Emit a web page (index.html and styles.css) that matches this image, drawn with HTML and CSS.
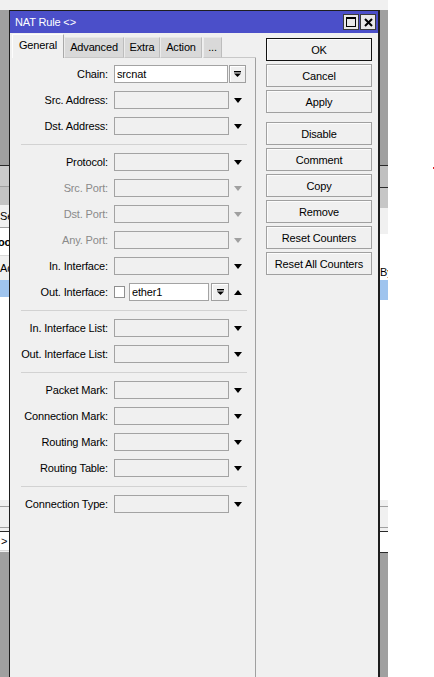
FILE: index.html
```html
<!DOCTYPE html>
<html>
<head>
<meta charset="utf-8">
<link rel="stylesheet" href="styles.css">
</head>
<body>
<div class="desktop">
  <div class="strip strip-l">
    <div class="b-gray155"></div>
    <div class="b-line-dark"></div>
    <div class="b-c20"></div>
    <div class="b-line-mid"></div>
    <div class="b-c18"></div>
    <div class="b-f22 bt"><span class="cut">Se</span></div>
    <div class="b-line-mid"></div>
    <div class="b-w27 bt bold"><span class="cut2">oo</span></div>
    <div class="b-line-light"></div>
    <div class="b-f24 bt"><span class="cut">Ad</span></div>
    <div class="b-blue17"></div>
    <div class="b-w203"></div>
    <div class="b-f6"></div>
    <div class="b-line-mid"></div>
    <div class="b-f20"></div>
    <div class="b-line-mid"></div>
    <div class="b-f3"></div>
    <div class="b-line-dark"></div>
    <div class="b-w18 bt"><span class="cut3">&gt;</span></div>
    <div class="b-line-light"></div>
    <div class="b-f1"></div>
    <div class="b-gray-rest"></div>
  </div>

  <div class="window">
    <div class="titlebar">
      <span class="title">NAT Rule &lt;&gt;</span>
      <div class="tb-btns">
        <div class="tb-btn">
          <svg width="10" height="10" viewBox="0 0 10 10"><rect x="0.5" y="0.5" width="9" height="9" fill="none" stroke="#000" stroke-width="1"/><rect x="0" y="0" width="10" height="2" fill="#000"/></svg>
        </div>
        <div class="tb-btn">
          <svg width="9" height="9" viewBox="0 0 9 9"><path d="M1 1 L8 8 M8 1 L1 8" stroke="#000" stroke-width="2" fill="none"/></svg>
        </div>
      </div>
    </div>
    <div class="wbody">
      <div class="tabsarea">
        <div class="tabs">
          <div class="tab active w-gen">General</div>
          <div class="tab w-adv">Advanced</div>
          <div class="tab w-ext">Extra</div>
          <div class="tab w-act">Action</div>
          <div class="tab w-more">...</div>
          <div class="tabfill"></div>
        </div>
        <div class="panel">
          <div class="row">
            <div class="lbl">Chain:</div>
            <div class="field white short">srcnat</div>
            <div class="ddbtn chainbtn"><svg width="7" height="6" viewBox="0 0 7 6"><rect x="0" y="0" width="7" height="1.4" fill="#000"/><polygon points="0,2.4 7,2.4 3.5,6" fill="#000"/></svg></div>
          </div>
          <div class="row">
            <div class="lbl">Src. Address:</div>
            <div class="field"></div>
            <div class="arrow"><span class="tri-down"></span></div>
          </div>
          <div class="row">
            <div class="lbl">Dst. Address:</div>
            <div class="field"></div>
            <div class="arrow"><span class="tri-down"></span></div>
          </div>
          <div class="sep"></div>
          <div class="row">
            <div class="lbl">Protocol:</div>
            <div class="field"></div>
            <div class="arrow"><span class="tri-down"></span></div>
          </div>
          <div class="row dis">
            <div class="lbl">Src. Port:</div>
            <div class="field"></div>
            <div class="arrow"><span class="tri-down"></span></div>
          </div>
          <div class="row dis">
            <div class="lbl">Dst. Port:</div>
            <div class="field"></div>
            <div class="arrow"><span class="tri-down"></span></div>
          </div>
          <div class="row dis">
            <div class="lbl">Any. Port:</div>
            <div class="field"></div>
            <div class="arrow"><span class="tri-down"></span></div>
          </div>
          <div class="row">
            <div class="lbl">In. Interface:</div>
            <div class="field"></div>
            <div class="arrow"><span class="tri-down"></span></div>
          </div>
          <div class="row">
            <div class="lbl">Out. Interface:</div>
            <div class="check"></div>
            <div class="field white narrow">ether1</div>
            <div class="ddbtn ifbtn"><svg width="7" height="6" viewBox="0 0 7 6"><rect x="0" y="0" width="7" height="1.4" fill="#000"/><polygon points="0,2.4 7,2.4 3.5,6" fill="#000"/></svg></div>
            <div class="arrow"><span class="tri-up"></span></div>
          </div>
          <div class="sep"></div>
          <div class="row">
            <div class="lbl">In. Interface List:</div>
            <div class="field"></div>
            <div class="arrow"><span class="tri-down"></span></div>
          </div>
          <div class="row">
            <div class="lbl">Out. Interface List:</div>
            <div class="field"></div>
            <div class="arrow"><span class="tri-down"></span></div>
          </div>
          <div class="sep"></div>
          <div class="row">
            <div class="lbl">Packet Mark:</div>
            <div class="field"></div>
            <div class="arrow"><span class="tri-down"></span></div>
          </div>
          <div class="row">
            <div class="lbl">Connection Mark:</div>
            <div class="field"></div>
            <div class="arrow"><span class="tri-down"></span></div>
          </div>
          <div class="row">
            <div class="lbl">Routing Mark:</div>
            <div class="field"></div>
            <div class="arrow"><span class="tri-down"></span></div>
          </div>
          <div class="row">
            <div class="lbl">Routing Table:</div>
            <div class="field"></div>
            <div class="arrow"><span class="tri-down"></span></div>
          </div>
          <div class="sep"></div>
          <div class="row">
            <div class="lbl">Connection Type:</div>
            <div class="field"></div>
            <div class="arrow"><span class="tri-down"></span></div>
          </div>
        </div>
      </div>
      <div class="buttons">
        <div class="btn default">OK</div>
        <div class="btn">Cancel</div>
        <div class="btn">Apply</div>
        <div class="btn gap-before">Disable</div>
        <div class="btn">Comment</div>
        <div class="btn">Copy</div>
        <div class="btn">Remove</div>
        <div class="btn">Reset Counters</div>
        <div class="btn">Reset All Counters</div>
      </div>
    </div>
  </div>

  <div class="strip strip-r">
    <div class="b-gray155"></div>
    <div class="b-line-dark"></div>
    <div class="b-c21"></div>
    <div class="b-line-dark"></div>
    <div class="b-c20b"></div>
    <div class="b-f26"></div>
    <div class="b-w29"></div>
    <div class="b-w17 bt"><span class="cut">By</span></div>
    <div class="b-blue20"></div>
    <div class="b-w200"></div>
    <div class="b-f6"></div>
    <div class="b-line-mid"></div>
    <div class="b-f20"></div>
    <div class="b-line-mid"></div>
    <div class="b-f3"></div>
    <div class="b-line-dark"></div>
    <div class="b-w20"></div>
    <div class="b-line-dark"></div>
    <div class="b-gray-rest"></div>
  </div>
</div>
<div class="whitecol"><div class="reddot"></div></div>
</body>
</html>
```
FILE: styles.css
```css
* { box-sizing: border-box; }
html, body {
  margin: 0;
  height: 677px;
  overflow: hidden;
  background: #fff;
}
body {
  display: flex;
  font-family: "Liberation Sans", Arial, sans-serif;
  font-size: 11px;
  letter-spacing: -0.15px;
  color: #000;
}
.desktop {
  width: 388px;
  height: 677px;
  background: #f0f0f0;
  padding-top: 10px;
  display: flex;
  flex: none;
}
.strip {
  display: flex;
  flex-direction: column;
  overflow: hidden;
  flex: none;
}
.strip > div { flex: none; overflow: hidden; white-space: nowrap; }
.strip-l { width: 9px; }
.strip-r { width: 8px; }

.b-gray155 { height: 155px; background: #a0a0a0; }
.b-line-dark { height: 1px; background: #2a2a2a; }
.b-line-mid { height: 1px; background: #a0a0a0; }
.b-line-light { height: 1px; background: #d8d8d8; }
.b-c20 { height: 20px; background: #cbcbcb; }
.b-c18 { height: 18px; background: #c3c3c3; }
.b-c21 { height: 21px; background: #c0c0c0; }
.b-c20b { height: 20px; background: #c6c6c6; }
.b-f22 { height: 22px; background: #f0f0f0; }
.b-f24 { height: 24px; background: #f0f0f0; }
.b-f26 { height: 26px; background: #f0f0f0; }
.b-f20 { height: 20px; background: #f0f0f0; }
.b-f6 { height: 6px; background: #f0f0f0; }
.b-f3 { height: 3px; background: #f0f0f0; }
.b-f1 { height: 1px; background: #f0f0f0; }
.b-w27 { height: 27px; background: #fff; }
.b-w29 { height: 29px; background: #fff; }
.b-w17 { height: 17px; background: #fff; }
.b-w18 { height: 18px; background: #fff; }
.b-w20 { height: 20px; background: #fff; }
.b-w203 { height: 203px; background: #fff; }
.b-w200 { height: 200px; background: #fff; }
.b-blue17 { height: 17px; background: #9fc4ee; }
.b-blue20 { height: 20px; background: #9fc4ee; }
.b-gray-rest { flex: 1 !important; background: #a0a0a0; }
.bt { display: flex; align-items: center; }
.bold { font-weight: bold; }
.cut { margin-left: 0; }
.cut2 { margin-left: -2px; }
.cut3 { margin-left: 1px; }

.window {
  width: 371px;
  height: 667px;
  flex: none;
  border-left: 1px solid #1e1e1e;
  border-right: 2px solid #1e1e1e;
  border-top: 1px solid #1e1e1e;
  background: #f0f0f0;
  display: flex;
  flex-direction: column;
}
.titlebar {
  height: 22px;
  flex: none;
  background: #4b4fc9;
  color: #fff;
  display: flex;
  align-items: center;
  padding-left: 5px;
}
.title { font-size: 11px; }
.tb-btns {
  margin-left: auto;
  margin-right: 2px;
  display: flex;
  gap: 1px;
}
.tb-btn {
  width: 16px;
  height: 16px;
  background: #e8e8e8;
  border: 1px solid #3a3a3a;
  display: flex;
  align-items: center;
  justify-content: center;
}

.wbody {
  flex: 1;
  display: flex;
  padding-left: 2px;
  padding-top: 1px;
  min-height: 0;
}
.tabsarea {
  width: 244px;
  flex: none;
  display: flex;
  flex-direction: column;
}
.tabs {
  height: 24px;
  display: flex;
  align-items: flex-end;
  flex: none;
}
.tab {
  height: 21px;
  background: #d9d9d9;
  border-top: 1px solid #e6e6e6;
  border-left: 1px solid #ececec;
  border-right: 1px solid #bdbdbd;
  border-bottom: 1px solid #c8c8c8;
  display: flex;
  align-items: center;
  justify-content: center;
  padding-bottom: 1px;
  flex: none;
}
.tab.active {
  height: 24px;
  background: #f0f0f0;
  border-top: 1px solid #fdfdfd;
  border-left: 1px solid #fdfdfd;
  border-right: 1px solid #a9a9a9;
  border-bottom: none;
  padding-bottom: 4px;
}
.w-gen { width: 52px; }
.w-adv { width: 60px; }
.w-ext { width: 36px; }
.w-act { width: 42px; }
.w-more { width: 19px; margin-left: 1px; }
.tabfill {
  flex: 1;
  height: 1px;
  background: #c8c8c8;
}
.panel {
  flex: 1;
  border-right: 1px solid #a0a0a0;
  padding-top: 3px;
}
.row {
  height: 26px;
  display: flex;
  align-items: center;
}
.lbl {
  width: 96px;
  text-align: right;
  margin-right: 6px;
  white-space: nowrap;
  flex: none;
}
.field {
  width: 115px;
  height: 18px;
  border: 1px solid #a3a3a3;
  background: #f0f0f0;
  flex: none;
  padding-left: 2px;
  line-height: 16px;
  white-space: nowrap;
}
.field.white { background: #fff; }
.field.short { width: 114px; margin-right: 1px; }
.field.narrow { width: 80px; margin-right: 2px; }
.check {
  width: 11px;
  height: 12px;
  border: 1px solid #8f8f8f;
  background: #fff;
  margin-right: 4px;
  flex: none;
}
.ddbtn {
  height: 18px;
  border: 1px solid #a0a0a0;
  background: #f0f0f0;
  box-shadow: inset 1px 1px #fff;
  display: flex;
  align-items: center;
  justify-content: center;
  flex: none;
}
.chainbtn { width: 17px; }
.ifbtn { width: 18px; }
.arrow {
  width: 18px;
  height: 18px;
  display: flex;
  align-items: center;
  justify-content: center;
  flex: none;
}
.tri-down {
  width: 0;
  height: 0;
  border-left: 4px solid transparent;
  border-right: 4px solid transparent;
  border-top: 5px solid #000;
}
.tri-up {
  width: 0;
  height: 0;
  border-left: 4px solid transparent;
  border-right: 4px solid transparent;
  border-bottom: 5px solid #000;
}
.dis .lbl { color: #8a8a8a; }
.dis .tri-down { border-top-color: #a0a0a0; }
.sep {
  height: 1px;
  background: #d2d2d2;
  margin: 5px 8px 4px 9px;
}

.buttons {
  width: 106px;
  margin-left: 10px;
  margin-top: 4px;
  display: flex;
  flex-direction: column;
  gap: 3px;
  flex: none;
}
.btn {
  height: 23px;
  border: 1px solid #a0a0a0;
  background: #f0f0f0;
  box-shadow: inset 1px 1px #fcfcfc;
  display: flex;
  align-items: center;
  justify-content: center;
  white-space: nowrap;
}
.btn.default { border-color: #111; }
.btn.gap-before { margin-top: 6px; }

.whitecol {
  flex: 1;
  padding-top: 167px;
  padding-left: 45px;
}
.reddot {
  width: 1px;
  height: 2px;
  background: #e02020;
}
```
